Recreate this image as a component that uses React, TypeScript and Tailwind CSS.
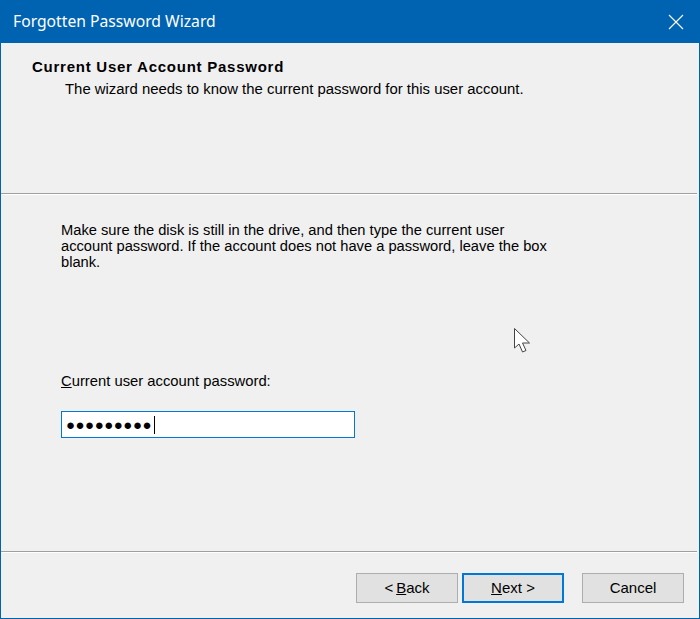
import React from "react";

const sans = { fontFamily: '"Liberation Sans", Arial, sans-serif' };

function WinButton({
  children,
  primary,
  className = "",
}: {
  children: React.ReactNode;
  primary?: boolean;
  className?: string;
}) {
  return (
    <button
      className={
        "h-[30px] w-[102px] bg-[#e1e1e1] text-[15px] text-black flex items-center justify-center " +
        (primary ? "border-2 border-[#0078d7]" : "border border-[#adadad]") +
        " " +
        className
      }
    >
      {children}
    </button>
  );
}

export default function App() {
  return (
    <div
      className="w-[700px] h-[619px] flex flex-col bg-[#f0f0f0] border-x border-b border-[#0063b1] text-black"
      style={sans}
    >
      {/* title bar */}
      <div className="h-[43px] shrink-0 bg-[#0063b1] flex items-center justify-between pl-[12px] pr-[15px]">
        <span
          className="text-white text-[15.7px]"
          style={{ fontFamily: '"Noto Sans", "Open Sans", sans-serif' }}
        >
          Forgotten Password Wizard
        </span>
        <svg width="16" height="16" viewBox="0 0 16 16">
          <path d="M1 1 L15 15 M15 1 L1 15" stroke="#ffffff" strokeWidth="1.1" />
        </svg>
      </div>

      {/* header */}
      <div className="h-[150px] shrink-0 pt-[15px] pl-[31px]">
        <div className="text-[15px] font-bold leading-[18px] tracking-[0.75px]">
          Current User Account Password
        </div>
        <div className="text-[14.9px] leading-[18px] pl-[33px] mt-[4px]">
          The wizard needs to know the current password for this user account.
        </div>
      </div>
      <div className="h-[2px] mr-[2px] border-t border-[#a0a0a0] border-b border-b-[#ffffff]" />

      {/* body */}
      <div className="flex-1 relative pl-[60px] pt-[27px]">
        <p className="text-[14.7px] leading-[16px] w-[493px]">
          Make sure the disk is still in the drive, and then type the current user account
          password. If the account does not have a password, leave the box blank.
        </p>

        <div className="mt-[102px] text-[14.8px] leading-[18px]">
          <span className="underline">C</span>urrent user account password:
        </div>
        <div className="mt-[21px] w-[294px] h-[27px] bg-white border border-[#0078d7] flex items-center pl-[4px]">
          <span className="text-[15px] tracking-[0.5px] leading-none">●●●●●●●●●</span>
          <span className="w-[1px] h-[18px] bg-black ml-[2px]" />
        </div>

        {/* mouse pointer */}
        <svg
          width="20"
          height="28"
          viewBox="0 0 20 28"
          className="absolute left-[512px] top-[132px]"
        >
          <path
            d="M1.5 1.5 L1.5 21 L6 17 L9.5 25 L13 23.5 L9.5 16 L16.5 16 Z"
            fill="#ffffff"
            stroke="#444444"
            strokeWidth="1"
          />
        </svg>
      </div>

      <div className="h-[2px] mr-[2px] border-t border-[#a0a0a0] border-b border-b-[#ffffff]" />

      {/* footer */}
      <div className="h-[65px] shrink-0 flex items-start pt-[20px] pl-[355px]">
        <WinButton>
          &lt; <span className="underline ml-[3px]">B</span>ack
        </WinButton>
        <WinButton primary className="ml-[4px]">
          <span className="underline">N</span>ext &gt;
        </WinButton>
        <WinButton className="ml-[18px]">Cancel</WinButton>
      </div>
    </div>
  );
}
